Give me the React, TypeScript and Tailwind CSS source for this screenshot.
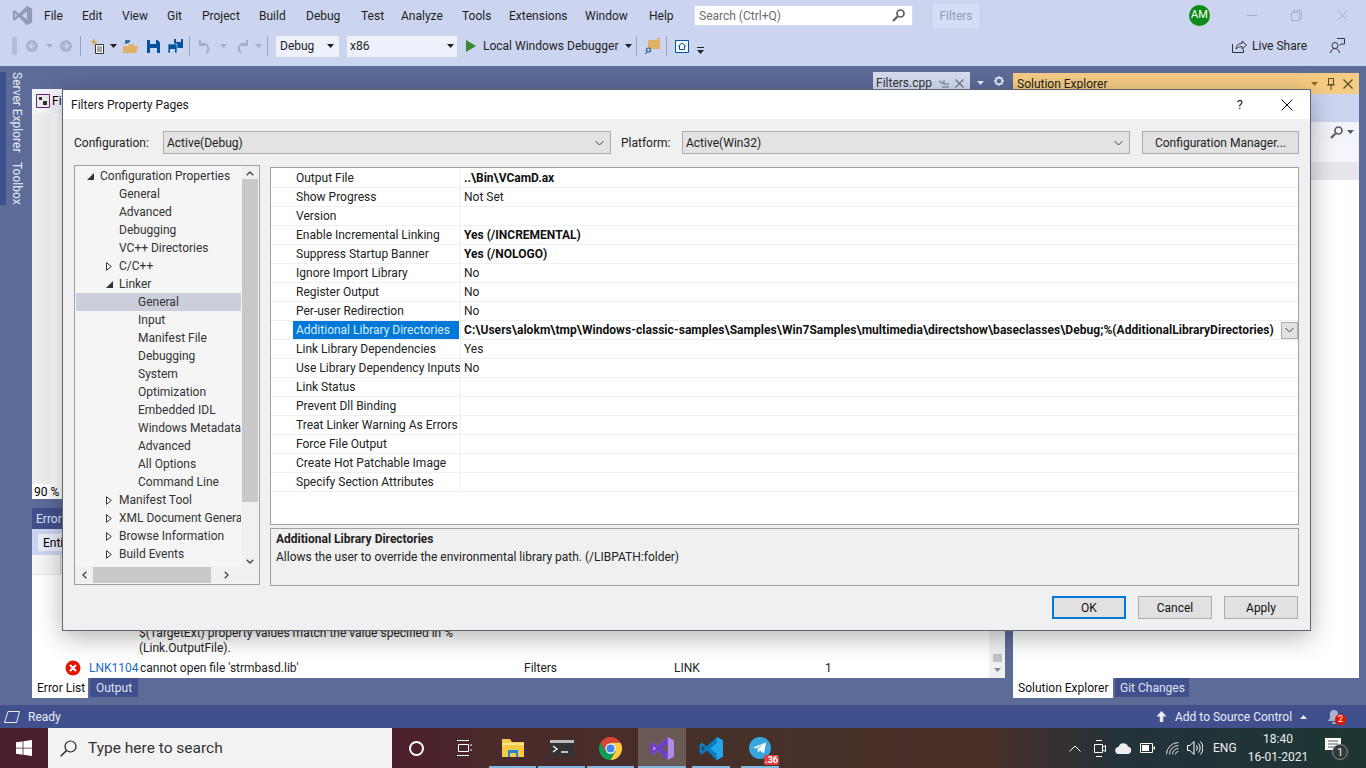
import React from 'react';

const menus: [string, string][] = [
  ['File', 'w-[38px]'],
  ['Edit', 'w-[40px]'],
  ['View', 'w-[45px]'],
  ['Git', 'w-[35px]'],
  ['Project', 'w-[57px]'],
  ['Build', 'w-[47px]'],
  ['Debug', 'w-[55px]'],
  ['Test', 'w-[40px]'],
  ['Analyze', 'w-[61px]'],
  ['Tools', 'w-[47px]'],
  ['Extensions', 'w-[76px]'],
  ['Window', 'w-[64px]'],
  ['Help', 'w-[45px]'],
];

const tree: { label: string; level: number; arrow?: 'open' | 'closed'; selected?: boolean }[] = [
  { label: 'Configuration Properties', level: 0, arrow: 'open' },
  { label: 'General', level: 1 },
  { label: 'Advanced', level: 1 },
  { label: 'Debugging', level: 1 },
  { label: 'VC++ Directories', level: 1 },
  { label: 'C/C++', level: 1, arrow: 'closed' },
  { label: 'Linker', level: 1, arrow: 'open' },
  { label: 'General', level: 2, selected: true },
  { label: 'Input', level: 2 },
  { label: 'Manifest File', level: 2 },
  { label: 'Debugging', level: 2 },
  { label: 'System', level: 2 },
  { label: 'Optimization', level: 2 },
  { label: 'Embedded IDL', level: 2 },
  { label: 'Windows Metadata', level: 2 },
  { label: 'Advanced', level: 2 },
  { label: 'All Options', level: 2 },
  { label: 'Command Line', level: 2 },
  { label: 'Manifest Tool', level: 1, arrow: 'closed' },
  { label: 'XML Document Genera', level: 1, arrow: 'closed' },
  { label: 'Browse Information', level: 1, arrow: 'closed' },
  { label: 'Build Events', level: 1, arrow: 'closed' },
];

const props: { name: string; value?: string; bold?: boolean; selected?: boolean }[] = [
  { name: 'Output File', value: '..\\Bin\\VCamD.ax', bold: true },
  { name: 'Show Progress', value: 'Not Set' },
  { name: 'Version' },
  { name: 'Enable Incremental Linking', value: 'Yes (/INCREMENTAL)', bold: true },
  { name: 'Suppress Startup Banner', value: 'Yes (/NOLOGO)', bold: true },
  { name: 'Ignore Import Library', value: 'No' },
  { name: 'Register Output', value: 'No' },
  { name: 'Per-user Redirection', value: 'No' },
  {
    name: 'Additional Library Directories',
    value: 'C:\\Users\\alokm\\tmp\\Windows-classic-samples\\Samples\\Win7Samples\\multimedia\\directshow\\baseclasses\\Debug;%(AdditionalLibraryDirectories)',
    bold: true,
    selected: true,
  },
  { name: 'Link Library Dependencies', value: 'Yes' },
  { name: 'Use Library Dependency Inputs', value: 'No' },
  { name: 'Link Status' },
  { name: 'Prevent Dll Binding' },
  { name: 'Treat Linker Warning As Errors' },
  { name: 'Force File Output' },
  { name: 'Create Hot Patchable Image' },
  { name: 'Specify Section Attributes' },
];

const Caret = ({ className = 'text-[#1e1e1e]' }: { className?: string }) => (
  <svg width="7" height="4" viewBox="0 0 7 4" className={className}>
    <path d="M0 0h7L3.500 4z" fill="currentColor" />
  </svg>
);

const Sep = ({ className }: { className: string }) => <div className={`w-px h-[20px] bg-[#9aa5c4] ${className}`} />;

const VsLogo = ({ size, color, dark }: { size: number; color: string; dark: string }) => (
  <svg width={size} height={size} viewBox="0 0 24 24">
    <path d="M17 1l6 3v16l-6 3-9-9-5 4-2-1V7l2-1 5 4z" fill={color} />
    <path d="M17 7.500L11.500 12l5.500 4.500zM3.500 9.500v5L6 12z" fill={dark} />
  </svg>
);

const NavCircle = ({ back }: { back?: boolean }) => (
  <svg width="12" height="12" viewBox="0 0 12 12">
    <circle cx="6" cy="6" r="6" fill="#aab3cb" />
    <path d={back ? 'M6.500 3L3.500 6l3 3M3.500 6h5.500' : 'M5.500 3l3 3-3 3M8.500 6H3'} fill="none" stroke="#ccd5f0" strokeWidth="1.400" />
  </svg>
);

const TreeArrow = ({ kind }: { kind: 'open' | 'closed' }) =>
  kind === 'open' ? (
    <svg width="7" height="7" viewBox="0 0 7 7">
      <path d="M7 0v7H0z" fill="#333" />
    </svg>
  ) : (
    <svg width="6" height="9" viewBox="0 0 6 9">
      <path d="M.5.700L5.300 4.500.5 8.300z" fill="#fff" stroke="#333" />
    </svg>
  );

const DialogButton = ({ label, primary }: { label: string; primary?: boolean }) => (
  <div
    className={`w-[74px] h-[23px] flex items-center justify-center bg-[#e1e1e1] text-[12px] text-[#111] ${
      primary ? 'border-2 border-[#0078d7]' : 'border border-[#adadad]'
    }`}
  >
    {label}
  </div>
);

const Combo = ({ label, width }: { label: string; width: string }) => (
  <div className={`${width} h-[23px] flex items-center justify-between bg-[#e3e3e3] border border-[#adadad] pl-[3px] pr-[6px] text-[12px] text-[#222]`}>
    <span>{label}</span>
    <svg width="9" height="6" viewBox="0 0 9 6">
      <path d="M.5 1l4 4 4-4" fill="none" stroke="#444" />
    </svg>
  </div>
);

const Dialog = () => (
  <div className="absolute left-[62px] top-[89px] w-[1249px] h-[542px] flex flex-col bg-[#f0f0f0] border border-[#5f6470] shadow-[0_6px_24px_rgba(0,0,0,0.3)]">
    <div className="h-[29px] shrink-0 bg-white flex items-center justify-between pl-[8px] text-[12px] text-[#1a1a1a]">
      <span>Filters Property Pages</span>
      <div className="flex items-center">
        <span className="text-[13px] mr-[38px]">?</span>
        <svg width="12" height="12" viewBox="0 0 12 12" className="mr-[17px]">
          <path d="M.5.500l11 11m0-11l-11 11" stroke="#111" />
        </svg>
      </div>
    </div>
    <div className="flex items-center h-[23px] mt-[12px] ml-[11px] text-[12px] text-[#222]">
      <span className="w-[89px]">Configuration:</span>
      <Combo label="Active(Debug)" width="w-[448px]" />
      <span className="ml-[10px] w-[61px]">Platform:</span>
      <Combo label="Active(Win32)" width="w-[448px]" />
      <div className="ml-[12px] w-[157px] h-[23px] flex items-center justify-center bg-[#e1e1e1] border border-[#adadad]">Configuration Manager...</div>
    </div>
    <div className="flex mt-[11px] ml-[11px]">
      <div className="w-[186px] h-[420px] border border-[#a0a0a0] bg-[#f5f5f5] flex flex-col">
        <div className="flex flex-1 min-h-0">
          <div className="w-[166px] pl-[1px] pt-[1px] overflow-hidden">
            {tree.map((t, i) => (
              <div
                key={i}
                className={`h-[18px] flex items-center text-[12px] text-[#333] whitespace-nowrap ${t.selected ? 'bg-[#cccedb]' : ''}`}
              >
                <span className={`flex items-center justify-center w-[12px] shrink-0 ${t.level === 0 ? 'ml-[8px] mr-[4px]' : t.level === 1 ? 'ml-[27px] mr-[4px]' : 'ml-[46px] mr-[4px]'}`}>
                  {t.arrow && <TreeArrow kind={t.arrow} />}
                </span>
                <span>{t.label}</span>
              </div>
            ))}
          </div>
          <div className="w-[16px] ml-[1px] flex flex-col items-center bg-[#f0f0f0]">
            <div className="h-[8px] mt-[3px] mb-[1px] flex items-center">
              <svg width="8" height="5" viewBox="0 0 8 5"><path d="M.7 4.300L4 1l3.300 3.300" fill="none" stroke="#444" strokeWidth="1.300" /></svg>
            </div>
            <div className="w-[16px] h-[323px] mt-[1px] bg-[#c8c8c8]" />
            <div className="flex-1" />
            <div className="mb-[3px]">
              <svg width="8" height="5" viewBox="0 0 8 5"><path d="M.7.700L4 4l3.300-3.300" fill="none" stroke="#444" strokeWidth="1.300" /></svg>
            </div>
          </div>
        </div>
        <div className="h-[16px] mb-[1px] flex items-center shrink-0 bg-[#f0f0f0]">
          <div className="w-[18px] flex justify-center">
            <svg width="5" height="8" viewBox="0 0 5 8"><path d="M4.300.700L1 4l3.300 3.300" fill="none" stroke="#444" strokeWidth="1.300" /></svg>
          </div>
          <div className="w-[118px] h-[16px] bg-[#c8c8c8]" />
          <div className="w-[30px] flex justify-center">
            <svg width="5" height="8" viewBox="0 0 5 8"><path d="M.7.700L4 4 .7 7.300" fill="none" stroke="#444" strokeWidth="1.300" /></svg>
          </div>
        </div>
      </div>
      <div className="ml-[10px] w-[1029px] flex flex-col">
        <div className="mt-[2px] h-[358px] border border-[#a0a0a0] bg-white pt-[1px]">
          {props.map((p) => (
            <div key={p.name} className="h-[19px] flex items-center text-[12px] text-[#222] border-b border-[#f0f0f0]">
              <div className={`w-[166px] ml-[22px] h-full pl-[3px] flex items-center whitespace-nowrap shrink-0 ${p.selected ? 'bg-[#0078d7] text-[#d8ecff]' : ''}`}>
                {p.name}
              </div>
              <div className={`ml-[1px] pl-[3px] flex-1 min-w-0 h-full flex items-center whitespace-nowrap overflow-hidden border-l border-[#f0f0f0] ${p.bold ? 'font-bold text-[#111]' : ''} ${p.selected ? 'tracking-[0.05px]' : ''}`}>
                {p.value}
              </div>
              {p.selected && (
                <div className="w-[17px] h-[17px] shrink-0 flex items-center justify-center bg-[#e1e1e1] border border-[#adadad]">
                  <svg width="9" height="6" viewBox="0 0 9 6"><path d="M.5 1l4 4 4-4" fill="none" stroke="#444" /></svg>
                </div>
              )}
            </div>
          ))}
        </div>
        <div className="mt-[3px] h-[58px] border border-[#a0a0a0] bg-[#f0f0f0] px-[5px] pt-[1px] text-[12px] text-[#222]">
          <div className="font-bold leading-[18px]">Additional Library Directories</div>
          <div className="leading-[18px]">Allows the user to override the environmental library path. (/LIBPATH:folder)</div>
        </div>
      </div>
    </div>
    <div className="flex justify-end gap-[12px] mt-[10px] mr-[12px]">
      <DialogButton label="OK" primary />
      <DialogButton label="Cancel" />
      <DialogButton label="Apply" />
    </div>
  </div>
);

const RunBar = () => <div className="absolute bottom-0 inset-x-[1px] h-[2px] bg-[#7fb8e0]" />;

const Taskbar = () => (
  <div className="h-[40px] shrink-0 flex items-center text-white bg-[linear-gradient(90deg,#4b1f2d_0%,#4d1f2c_29%,#4a2a2a_36%,#46312a_55%,#4a2e28_72%,#24323a_82%,#1d3634_100%)]">
    <div className="w-[48px] flex justify-center">
      <svg width="16" height="16" viewBox="0 0 16 16">
        <path d="M0 2.300l6.600-.9v6.300H0zM7.400 1.300L16 0v7.700H7.400zM0 8.400h6.600v6.300L0 13.700zM7.400 8.400H16V16l-8.600-1.200z" fill="#fff" />
      </svg>
    </div>
    <div className="w-[344px] h-[40px] bg-[#f2f2f2] flex items-center pl-[12px] pt-[1px] text-[#333] text-[15.500px]">
      <svg width="17" height="17" viewBox="0 0 17 17" className="mr-[11px]">
        <circle cx="10.500" cy="6.500" r="5.500" fill="none" stroke="#222" strokeWidth="1.200" />
        <path d="M6.500 10.500L.7 16.300" stroke="#222" strokeWidth="1.400" />
      </svg>
      Type here to search
    </div>
    <div className="w-[48px] flex justify-center">
      <div className="w-[15px] h-[15px] rounded-full border-2 border-white" />
    </div>
    <div className="w-[48px] flex justify-center">
      <svg width="17" height="16" viewBox="0 0 17 16" fill="none" stroke="#fff">
        <path d="M1 .5h12M1 15.500h12M2.500 4.500h10v7h-10zM15 4v2M15 9v2" />
      </svg>
    </div>
    <div className="w-[49px] h-[40px] relative flex justify-center items-center">
      <svg width="22" height="18" viewBox="0 0 22 18">
        <path d="M0 0h8l2 3h12v15H0z" fill="#f7c948" />
        <path d="M0 4h22v2H0z" fill="#fde58a" />
        <path d="M6 11h10v7h-2v-4H8v4H6z" fill="#1e88d2" />
      </svg>
      <RunBar />
    </div>
    <div className="w-[49px] h-[40px] relative flex justify-center items-center">
      <svg width="24" height="17" viewBox="0 0 24 17">
        <path d="M0 0h24v3H0z" fill="#bbb" />
        <path d="M0 3h24v14H0z" fill="#333" />
        <path d="M3 6l4 3-4 3" fill="none" stroke="#eee" strokeWidth="1.500" />
        <path d="M11 12h7" stroke="#eee" strokeWidth="1.500" />
      </svg>
      <RunBar />
    </div>
    <div className="w-[49px] h-[40px] relative flex justify-center items-center">
      <svg width="23" height="23" viewBox="0 0 24 24">
        <path d="M12 0a12 12 0 0 1 10.400 6H12L6.800 15 1.600 6A12 12 0 0 1 12 0z" fill="#db4437" />
        <path d="M1.600 6A12 12 0 0 0 12 24l5.200-9H6.800z" fill="#0f9d58" />
        <path d="M22.400 6H12l5.200 9L12 24A12 12 0 0 0 22.400 6z" fill="#ffcd40" />
        <circle cx="12" cy="12" r="5.400" fill="#fff" />
        <circle cx="12" cy="12" r="4.200" fill="#4285f4" />
      </svg>
      <RunBar />
    </div>
    <div className="ml-[3px] w-[48px] h-[40px] relative flex justify-center items-center bg-[#6a5a56]">
      <svg width="25" height="25" viewBox="0 0 24 24">
        <path d="M17 1l6 3v16l-6 3-9.500-8.500L2.500 18 0 16.500v-9L2.500 6l5 3.500z" fill="#b18ae8" />
        <path d="M17 1v22L7.500 14.500 2.500 18 0 16.500v-9L2.500 6l5 3.500zM3 9.500v5l3-2.500z" fill="#6d3fc0" />
        <path d="M17 7L12 12l5 5z" fill="#6a5a56" />
      </svg>
      <div className="absolute bottom-0 inset-x-0 h-[2px] bg-[#7fb8e0]" />
    </div>
    <div className="ml-[5px] w-[40px] h-[40px] relative flex justify-center items-center">
      <svg width="25" height="25" viewBox="0 0 24 24">
        <path d="M17 1l6 3v16l-6 3L7.500 14 3 17.500.5 16v-8L3 6.500 7.500 10z" fill="#0a7cc4" />
        <path d="M17 1l6 3v16l-6 3zM17 7l-6 5 6 5" fill="#25a5ea" />
        <path d="M3 9.500v5L5.500 12z" fill="#46312a" />
      </svg>
      <RunBar />
    </div>
    <div className="ml-[9px] w-[40px] h-[40px] relative flex justify-center items-center">
      <svg width="22" height="22" viewBox="0 0 22 22">
        <circle cx="11" cy="11" r="11" fill="#37a6de" />
        <path d="M4 10.500l13-5-2 11-4-3-2 2-.500-3.500 6-5-7.500 4.500z" fill="#fff" />
      </svg>
      <div className="absolute right-[1px] bottom-[3px] px-[1px] bg-[#e04040] rounded-[2px] text-[9px] leading-[10px] font-bold">.36</div>
      <RunBar />
    </div>
    <div className="flex-1" />
    <div className="flex items-center text-[#eee] text-[12px]">
      <svg width="12" height="7" viewBox="0 0 12 7" className="mr-[13px]"><path d="M.5 6.500l5.500-5.500 5.500 5.500" fill="none" stroke="#fff" /></svg>
      <svg width="12" height="17" viewBox="0 0 12 17" className="mr-[9px]" fill="none" stroke="#fff">
        <path d="M2 .5h6M2 16.500h6M.5 4.500h8v8h-8zM9 7l2.500-1.500v6L9 10" />
      </svg>
      <svg width="17" height="11" viewBox="0 0 17 11" className="mr-[8px]"><path d="M4 11a3.500 3.500 0 0 1-.5-7 5 5 0 0 1 9.500-.5 3.800 3.800 0 0 1 0 7.500z" fill="#eee" /></svg>
      <svg width="15" height="10" viewBox="0 0 15 10" className="mr-[11px]">
        <path d="M.5.500h12v9H.500z" fill="none" stroke="#fff" /><path d="M2 2h7v6H2zM13.500 3.500H15v3h-1.500z" fill="#fff" />
      </svg>
      <svg width="13" height="13" viewBox="0 0 13 13" className="mr-[8px]" fill="none" stroke="#ddd">
        <path d="M.5 12.500A12 12 0 0 1 12.500.5M3.500 12.500A9 9 0 0 1 12.500 3.500M6.500 12.500A6 6 0 0 1 12.500 6.500M9.500 12.500a3 3 0 0 1 3-3" />
      </svg>
      <svg width="16" height="14" viewBox="0 0 16 14" className="mr-[10px]" fill="none" stroke="#fff">
        <path d="M.5 4.500h2.500L7 .5v13l-4-4H.5zM9.500 4.500a4 4 0 0 1 0 5M11.500 2.500a7 7 0 0 1 0 9M13.500 .5a10 10 0 0 1 0 13" />
      </svg>
      <span className="w-[36px]">ENG</span>
      <div className="flex flex-col items-center leading-[18px] w-[58px] mr-[18px] text-[12px] whitespace-nowrap">
        <span>18:40</span>
        <span>16-01-2021</span>
      </div>
      <div className="relative w-[28px] h-[24px] mr-[13px]">
        <svg width="16" height="14" viewBox="0 0 16 14" className="absolute left-0 top-[2px]">
          <path d="M0 0h16v12H0z" fill="#fff" /><path d="M3 3h10M3 6h10M3 9h7" stroke="#555" />
        </svg>
        <div className="absolute left-[7px] top-[8px] w-[16px] h-[16px] rounded-full bg-[#34393b] border border-[#888] flex items-center justify-center text-[11px] leading-none">1</div>
      </div>
    </div>
  </div>
);

export default function App() {
  return (
    <div className="relative w-[1366px] h-[768px] overflow-hidden flex flex-col bg-[#5d6b99] text-[12px] font-['Roboto','Noto_Sans',sans-serif]">
      {/* Title bar */}
      <div className="h-[31px] shrink-0 bg-[#ccd5f0] flex items-center text-[#1e1e1e]">
        <div className="w-[44px] flex justify-center">
          <VsLogo size={21} color="#929cb8" dark="#ccd5f0" />
        </div>
        <div className="flex">
          {menus.map(([m, w]) => (
            <span key={m} className={w}>{m}</span>
          ))}
        </div>
        <div className="w-[219px] h-[21px] bg-white border border-[#d5dcf0] flex items-center justify-between pl-[4px] pr-[7px] text-[#6d6d6d]">
          <span>Search (Ctrl+Q)</span>
          <svg width="13" height="13" viewBox="0 0 13 13">
            <circle cx="8.500" cy="4.500" r="3.500" fill="none" stroke="#5a5a5a" strokeWidth="1.700" />
            <path d="M5.500 7.500L1 12" stroke="#5a5a5a" strokeWidth="2.200" />
          </svg>
        </div>
        <div className="ml-[20px] w-[46px] h-[24px] bg-[#d6def5] flex items-center justify-center text-[#8e9ab8]">Filters</div>
        <div className="ml-[210px] w-[21px] h-[21px] rounded-full bg-[#0d8a17] text-white flex items-center justify-center text-[11px]">AM</div>
        <div className="ml-[37px] w-[10px] h-px bg-[#a5afc9]" />
        <svg width="11" height="11" viewBox="0 0 11 11" className="ml-[34px]" fill="none" stroke="#a5afc9">
          <path d="M.5 2.500h8v8h-8zM2.500 2.500v-2h8v8h-2" />
        </svg>
        <svg width="11" height="11" viewBox="0 0 11 11" className="ml-[35px]">
          <path d="M.5.500l10 10m0-10l-10 10" stroke="#a5afc9" />
        </svg>
      </div>

      {/* Toolbar */}
      <div className="h-[35px] pb-[5px] shrink-0 bg-[#ccd5f0] flex items-center text-[#1e1e1e] pl-[12px]">
        <div className="w-[5px] h-[18px] bg-[radial-gradient(#98a3bf_0.6px,transparent_0.8px)] bg-[length:2px_2px]" />
        <div className="ml-[9px] flex"><NavCircle back /></div>
        <div className="ml-[8px] flex"><Caret className="text-[#a3adc6]" /></div>
        <div className="ml-[7px] flex"><NavCircle /></div>
        <Sep className="ml-[8px]" />
        <svg width="16" height="16" viewBox="0 0 16 16" className="ml-[9px]">
          <path d="M5.500 6.500h8v9h-8z" fill="#fff" stroke="#333" />
          <path d="M7 9h5M7 11h5M7 13h5" stroke="#555" />
          <path d="M4 0l1 3 3 1-3 1-1 3-1-3-3-1 3-1z" fill="#d9a53c" />
        </svg>
        <div className="ml-[4px] flex"><Caret /></div>
        <svg width="15" height="15" viewBox="0 0 15 15" className="ml-[6px]">
          <path d="M0 7h5l1-2h5v2h4l-2 7H0z" fill="#dfb267" />
          <path d="M3 5V2l3 1.500M3 2h4" fill="none" stroke="#1a5f9e" strokeWidth="1.500" />
        </svg>
        <svg width="13" height="13" viewBox="0 0 13 13" className="ml-[9px]">
          <path d="M0 0h10.500L13 2.500V13H0z" fill="#00539c" />
          <path d="M3 0h6v4H3zM3 8h7v5H3z" fill="#ccd5f0" />
        </svg>
        <svg width="16" height="14" viewBox="0 0 16 14" className="ml-[8px]">
          <path d="M6 0h9v9H6z" fill="#00539c" />
          <path d="M8 0h5v3H8z" fill="#ccd5f0" />
          <path d="M0 5h9v9H0z" fill="#00539c" stroke="#ccd5f0" strokeWidth=".7" />
          <path d="M2 10h5v4H2z" fill="#ccd5f0" />
        </svg>
        <Sep className="ml-[5px]" />
        <svg width="15" height="15" viewBox="0 0 15 15" className="ml-[8px]" fill="none" stroke="#a3adc6" strokeWidth="2">
          <path d="M2 1v5h5M2.500 5.500A5 5 0 1 1 8 14" />
        </svg>
        <div className="ml-[7px] flex"><Caret className="text-[#a3adc6]" /></div>
        <svg width="15" height="15" viewBox="0 0 15 15" className="ml-[7px]" fill="none" stroke="#a3adc6" strokeWidth="2">
          <path d="M13 1v5H8M12.500 5.500A5 5 0 1 0 7 14" />
        </svg>
        <div className="ml-[6px] flex"><Caret className="text-[#a3adc6]" /></div>
        <Sep className="ml-[5px]" />
        <div className="ml-[8px] w-[63px] h-[21px] bg-[#edf1fb] flex items-center justify-between pl-[4px] pr-[5px]">
          <span>Debug</span><Caret />
        </div>
        <div className="ml-[8px] w-[110px] h-[21px] bg-[#edf1fb] flex items-center justify-between pl-[3px] pr-[3px]">
          <span>x86</span><Caret />
        </div>
        <svg width="10" height="12" viewBox="0 0 10 12" className="ml-[9px]"><path d="M0 0l10 6-10 6z" fill="#388a34" /></svg>
        <span className="ml-[7px] w-[136px] whitespace-nowrap">Local Windows Debugger</span>
        <div className="ml-[6px] flex"><Caret /></div>
        <Sep className="ml-[4px]" />
        <svg width="15" height="16" viewBox="0 0 15 16" className="ml-[8px]">
          <path d="M3 2h9V0h3v11H3z" fill="#dfb267" />
          <circle cx="3.500" cy="12" r="2" fill="none" stroke="#1a5f9e" strokeWidth="1.200" />
          <path d="M2 14l-2 2" stroke="#1a5f9e" strokeWidth="1.200" />
        </svg>
        <Sep className="ml-[6px]" />
        <svg width="14" height="13" viewBox="0 0 14 13" className="ml-[8px]">
          <path d="M.5.500h13v12H.5z" fill="#f4f7fd" stroke="#00539c" />
          <path d="M7 3l3.500 3H9.500v3.500h-5V6H3.500z" fill="#f4f7fd" stroke="#00539c" />
        </svg>
        <svg width="7" height="7" viewBox="0 0 7 7" className="ml-[8px] mt-[8px]"><path d="M0 0h7v1H0zM0 3h7L3.500 7z" fill="#222" /></svg>
        <div className="flex-1" />
        <svg width="15" height="14" viewBox="0 0 15 14" fill="none" stroke="#333" className="mr-[5px]">
          <path d="M.5 5v8.500h11V10M4 10c0-4 3-5.500 6-5.500V2l4.500 4-4.500 4V7.500c-3 0-4.500 1-6 2.500z" />
        </svg>
        <span className="w-[78px]">Live Share</span>
        <svg width="15" height="16" viewBox="0 0 15 16" fill="none" stroke="#333" className="mr-[21px]">
          <circle cx="5" cy="7.500" r="3" />
          <path d="M.5 15c.5-3 2-4.500 4.500-4.500S9 12 9.500 15M7 .5h7.500v5.500H11l-1.500 1.500" />
        </svg>
      </div>

      {/* Docking area */}
      <div className="flex-1 min-h-0 flex">
        <div className="w-[32px] shrink-0 flex">
          <div className="w-[6px] h-[133px] mt-[6px] bg-[#40508d]" />
          <div className="ml-[5px] mt-[6px] [writing-mode:vertical-rl] text-[#e6ebfa] flex gap-[10px] leading-[12px]">
            <span>Server Explorer</span>
            <span>Toolbox</span>
          </div>
        </div>

        <div className="w-[973px] shrink-0 flex flex-col">
          <div className="h-[23px] shrink-0 flex items-start">
            <div className="ml-[841px] mt-[6px] w-[97px] h-[17px] bg-[#d5dcf2] flex items-start pt-[4px] pl-[3px] text-[#333] whitespace-nowrap leading-[14px]">
              <span className="w-[62px]">Filters.cpp</span>
              <svg width="12" height="10" viewBox="0 0 12 10" fill="none" stroke="#8a94ad" className="mt-[2px]"><path d="M1 3l5 3h5M4 9h7M6 6V2" strokeWidth="1.500" /></svg>
              <svg width="9" height="9" viewBox="0 0 9 9" className="ml-[5px] mt-[3px]"><path d="M.5.500l8 8m0-8l-8 8" stroke="#717b96" strokeWidth="1.300" /></svg>
            </div>
            <div className="ml-[7px] mt-[15px] flex"><Caret className="text-[#e6ebfa]" /></div>
            <svg width="10" height="10" viewBox="0 0 10 10" className="ml-[10px] mt-[10px]">
              <circle cx="5" cy="5" r="3.300" fill="none" stroke="#dde3f5" strokeWidth="2" />
              <path d="M5 0v2M5 8v2M0 5h2M8 5h2M1.500 1.500l1.400 1.400M7.100 7.100l1.400 1.400M8.500 1.500L7.100 2.900M2.900 7.100L1.500 8.500" stroke="#dde3f5" strokeWidth="1.300" />
            </svg>
          </div>
          <div className="h-[24px] shrink-0 bg-[#f5f6fb] flex items-center pl-[4px] gap-[2px]">
            <svg width="14" height="14" viewBox="0 0 14 14"><path d="M.5.500h13v13H.5z" fill="#eee" stroke="#68217a" /><path d="M3 3h3v3H3zM7 7h4v4H7z" fill="#333" /></svg>
            <span>Fi</span>
          </div>
          <div className="h-[371px] shrink-0 bg-[linear-gradient(90deg,#eeeeee_0,#eeeeee_15px,#ffffff_22px)]" />
          <div className="h-[15px] shrink-0 bg-white pl-[2px] flex items-center">90 %</div>
          <div className="h-[9px] shrink-0" />
          <div className="h-[21px] shrink-0 bg-[#40508d] pl-[4px] text-[#dfe4f5] flex items-center">Error</div>
          <div className="h-[26px] shrink-0 bg-[#ccd5f0] pl-[6px] flex items-center">
            <span className="bg-[#e8edf9] pl-[5px] pr-[10px] h-[17px] mt-[1px] flex items-center">Entire</span>
          </div>
          <div className="h-[20px] shrink-0 bg-[#f5f5f5] border-b border-[#e5e5e5] flex">
            <div className="ml-[28px] w-px bg-[#cfcfcf]" />
          </div>
          <div className="flex-1 min-h-0 bg-white flex">
            <div className="flex-1 flex flex-col justify-end text-[#222]">
              <div className="pl-[107px] leading-[15px]">$(TargetExt) property values match the value specified in %</div>
              <div className="pl-[107px] leading-[15px]">(Link.OutputFile).</div>
              <div className="h-[20px] mt-[2px] flex items-center whitespace-nowrap">
                <svg width="16" height="16" viewBox="0 0 16 16" className="ml-[33px] shrink-0">
                  <circle cx="8" cy="8" r="7.500" fill="#e51400" />
                  <path d="M5 5l6 6m0-6l-6 6" stroke="#fff" strokeWidth="2" />
                </svg>
                <span className="ml-[8px] w-[51px] text-[#1b6ac6]">LNK1104</span>
                <span className="w-[384px]">cannot open file 'strmbasd.lib'</span>
                <span className="w-[150px]">Filters</span>
                <span className="w-[151px]">LINK</span>
                <span>1</span>
              </div>
            </div>
            <div className="w-[16px] bg-[#f0f0f0] flex flex-col items-center justify-end">
              <div className="w-[9px] h-[8px] bg-[#c2c3c9] mb-[6px]" />
              <div className="mb-[6px] flex"><Caret className="text-[#868999]" /></div>
            </div>
          </div>
          <div className="h-[27px] shrink-0 flex items-start whitespace-nowrap">
            <div className="w-[56px] h-[20px] bg-white pl-[5px] flex items-center text-[#111]">Error List</div>
            <div className="w-[48px] h-[19px] ml-[2px] bg-[#40508d] pl-[6px] flex items-center text-[#dfe4f5]">Output</div>
          </div>
        </div>

        <div className="w-[346px] shrink-0 ml-[8px] flex flex-col">
          <div className="h-[21px] mt-[7px] shrink-0 bg-[#f5cc84] flex items-center justify-between pl-[4px] pr-[6px] text-[#1e1e1e]">
            <span>Solution Explorer</span>
            <div className="flex items-center">
              <Caret className="text-[#8a6a20]" />
              <svg width="8" height="12" viewBox="0 0 8 12" fill="none" stroke="#5a4a20" className="ml-[9px]"><path d="M1.500.5h5v6h-5zM0 7h8M4 7v5" /></svg>
              <svg width="10" height="10" viewBox="0 0 10 10" className="ml-[8px]"><path d="M.5.500l9 9m0-9l-9 9" stroke="#5a4a20" strokeWidth="1.300" /></svg>
            </div>
          </div>
          <div className="h-[28px] shrink-0 bg-[#ccd5f0]" />
          <div className="h-[20px] shrink-0 bg-[#f2f4fb] flex items-center justify-end pr-[5px] gap-[4px]">
            <svg width="13" height="13" viewBox="0 0 13 13"><circle cx="8.500" cy="4.500" r="3.500" fill="none" stroke="#5a5a5a" strokeWidth="1.700" /><path d="M5.500 7.500L1 12" stroke="#5a5a5a" strokeWidth="2.200" /></svg>
            <Caret className="text-[#5a5a5a]" />
          </div>
          <div className="h-[20px] shrink-0 bg-[#f5f6fb]" />
          <div className="h-[18px] shrink-0 bg-[#e6e7ed]" />
          <div className="flex-1 min-h-0 bg-white" />
          <div className="h-[27px] shrink-0 flex items-start whitespace-nowrap">
            <div className="w-[100px] h-[20px] bg-white pl-[5px] flex items-center text-[#111]">Solution Explorer</div>
            <div className="w-[74px] h-[19px] ml-[2px] bg-[#40508d] pl-[5px] flex items-center text-[#dfe4f5]">Git Changes</div>
          </div>
        </div>
      </div>

      {/* Status bar */}
      <div className="h-[23px] shrink-0 bg-[#40508d] flex items-center text-[#e6ebfa]">
        <svg width="16" height="12" viewBox="0 0 16 12" className="ml-[4px]" fill="none" stroke="#e6ebfa"><path d="M4 .5h11.500l-3 11H.5z" /></svg>
        <span className="ml-[8px]">Ready</span>
        <div className="flex-1" />
        <svg width="11" height="11" viewBox="0 0 11 11" className="mr-[8px]"><path d="M5.500 0l5 5.500H7.200V11H3.800V5.500H.5z" fill="#e6ebfa" /></svg>
        <span className="w-[125px] whitespace-nowrap">Add to Source Control</span>
        <div className="mr-[21px] flex">
          <svg width="7" height="4" viewBox="0 0 7 4"><path d="M0 4h7L3.500 0z" fill="#e6ebfa" /></svg>
        </div>
        <div className="relative w-[14px] h-[14px] mr-[24px]">
          <svg width="12" height="14" viewBox="0 0 12 14"><path d="M6 0a4 4 0 0 1 4 4v4l2 3H0l2-3V4a4 4 0 0 1 4-4zM4.500 12h3v2h-3z" fill="#a9b3d2" /></svg>
          <div className="absolute left-[7px] top-[4px] w-[11px] h-[11px] rounded-full bg-[#e51400] text-white flex items-center justify-center text-[9px] leading-none">2</div>
        </div>
      </div>

      <Taskbar />
      <Dialog />
    </div>
  );
}
